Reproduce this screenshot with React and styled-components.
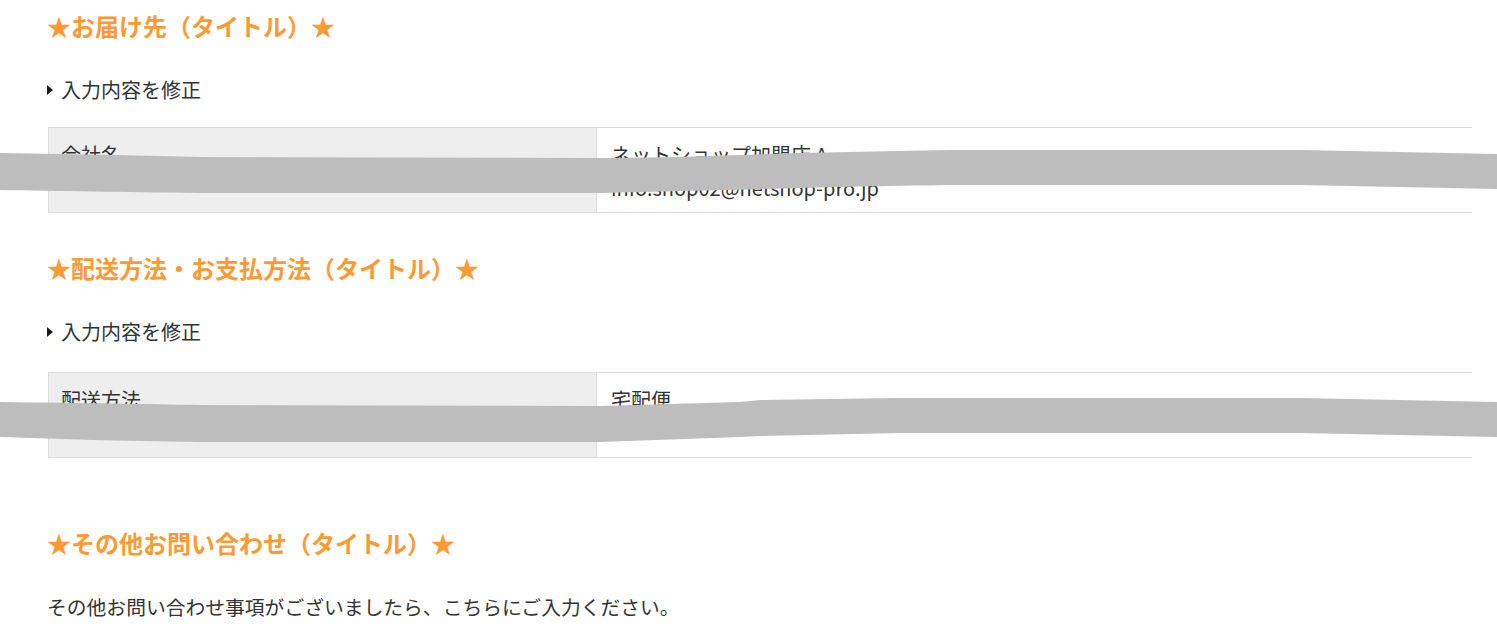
import React from 'react'
import styled, { createGlobalStyle } from 'styled-components'

const GlobalStyle = createGlobalStyle`
  html, body {
    margin: 0;
    padding: 0;
    background: #fff;
  }
  body {
    font-family: "Noto Sans CJK JP", "Noto Sans", sans-serif;
    color: #333;
  }
`

const Page = styled.div`
  position: relative;
  width: 1497px;
  height: 624px;
  overflow: hidden;
  box-sizing: border-box;
  padding: 8px 0 0 48px;
`

const Section = styled.section`
  margin-top: ${p => p.$gap || 0}px;
`

const Heading = styled.h2`
  margin: 0 0 31px -1px;
  font-size: 24px;
  line-height: 36px;
  font-weight: 700;
  color: #ff9933;
`

const EditLink = styled.a`
  display: flex;
  align-items: center;
  margin: 0 0 ${p => p.$after || 22}px -1px;
  font-size: 20px;
  line-height: 30px;
  color: #333;
  text-decoration: none;

  &::before {
    content: '';
    border-left: 6px solid #1a1a1a;
    border-top: 5px solid transparent;
    border-bottom: 5px solid transparent;
    margin-right: 8px;
  }
`

const Table = styled.div`
  display: grid;
  grid-template-columns: 549px 1fr;
  width: 1424px;
  border-top: 1px solid #dedede;
  border-bottom: 1px solid #dedede;
`

const Cell = styled.div`
  box-sizing: border-box;
  height: 84px;
  padding: ${p => (p.$head ? '10px 12px 8px' : '10px 14px 8px')};
  font-size: 20px;
  line-height: 33px;
  color: #333;
  background: ${p => (p.$head ? '#eeeeee' : '#fff')};
  border-left: ${p => (p.$head ? '1px solid #dedede' : 'none')};
  border-right: ${p => (p.$head ? '1px solid #dedede' : 'none')};
`

const Line = styled.div`
  white-space: nowrap;
`

const Note = styled.p`
  margin: 0 0 0 -1px;
  font-size: 19.8px;
  line-height: 30px;
  color: #333;
`

const Redaction = styled.svg`
  position: absolute;
  top: 0;
  left: 0;
  pointer-events: none;
`

const bands = [
  'M0,153 C80,154 150,156 200,157 L600,158 C700,157 760,154 800,153 L950,150 L1300,150 L1497,154 L1497,189 L1300,185 L950,185 C880,186 830,187 800,188 L600,193 L200,193 C120,192 60,191 0,190 Z',
  'M0,402 C80,403 150,404 200,405 L600,406 L740,402 L760,400 L900,398 L1300,398 L1497,402 L1497,437 L1300,433 L900,433 L760,436 L740,437 L600,442 L200,442 C120,441 60,439 0,437 Z'
]

const Star = '★'

export default function App() {
  return (
    <>
      <GlobalStyle />
      <Page>
        <Section>
          <Heading>{Star}お届け先（タイトル）{Star}</Heading>
          <EditLink href="#">入力内容を修正</EditLink>
          <Table>
            <Cell $head>
              <Line>会社名</Line>
            </Cell>
            <Cell>
              <Line>ネットショップ加盟店 A</Line>
              <Line>info.shop02@netshop-pro.jp</Line>
            </Cell>
          </Table>
        </Section>

        <Section $gap={37}>
          <Heading>{Star}配送方法・お支払方法（タイトル）{Star}</Heading>
          <EditLink href="#" $after={25}>入力内容を修正</EditLink>
          <Table>
            <Cell $head>
              <Line>配送方法</Line>
            </Cell>
            <Cell>
              <Line>宅配便</Line>
            </Cell>
          </Table>
        </Section>

        <Section $gap={67}>
          <Heading>{Star}その他お問い合わせ（タイトル）{Star}</Heading>
          <Note>その他お問い合わせ事項がございましたら、こちらにご入力ください。</Note>
        </Section>

        <Redaction width="1497" height="624" viewBox="0 0 1497 624">
          {bands.map((d, i) => (
            <path key={i} d={d} fill="#bdbdbd" />
          ))}
        </Redaction>
      </Page>
    </>
  )
}
